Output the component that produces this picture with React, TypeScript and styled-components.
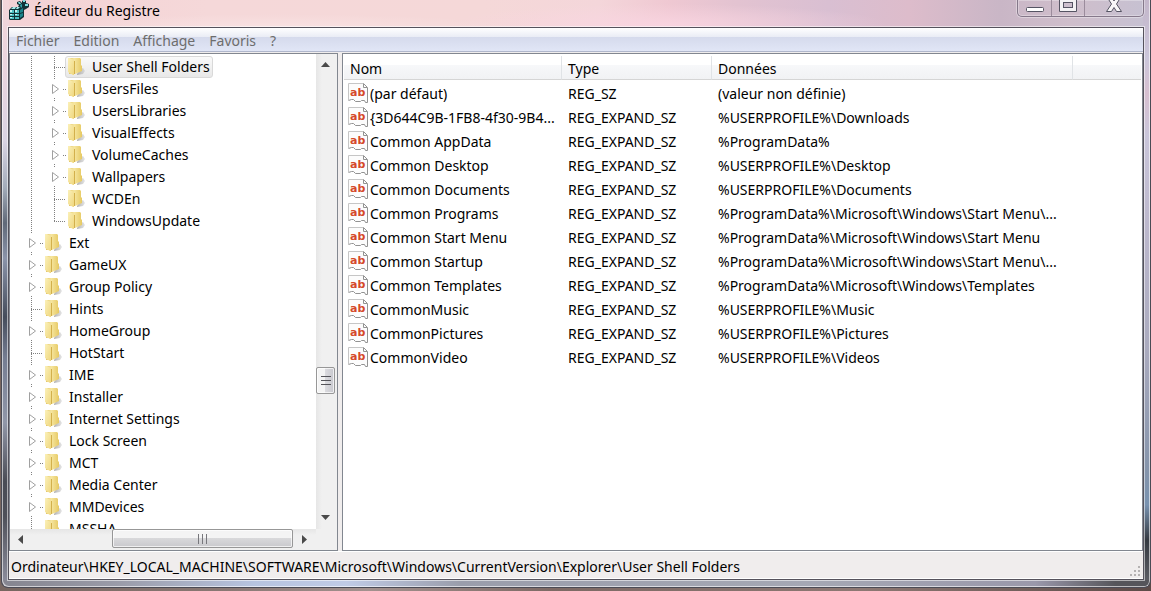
import React from 'react';
import styled, { createGlobalStyle, css } from 'styled-components';

const GlobalStyle = createGlobalStyle`
  *, *::before, *::after { box-sizing: border-box; }
  body {
    margin: 0;
    background: #77645f;
    color: #000;
    font: 14px/20px "Noto Sans", "Open Sans", sans-serif;
  }
  button {
    margin: 0;
    padding: 0;
    border: 0;
    background: none;
    color: inherit;
    font: inherit;
  }
`;

const Desktop = styled.div`
  display: flex;
  height: 100vh;
  padding: 0 0 3px 1px;
  background: linear-gradient(90deg, #77665f, #8a7874 20%, #a3918e 32%, #7d6964 48%, #8d7873 75%, #5d4b48);
`;

const Window = styled.div`
  flex: 1;
  min-width: 0;
  display: flex;
  flex-direction: column;
  border: 1px solid #4b4b55;
  border-top: 0;
  border-radius: 0 0 7px 7px;
  box-shadow: inset 1px -1px 0 rgba(255, 255, 255, 0.6), inset -1px 0 0 rgba(255, 255, 255, 0.6);
  background:
    linear-gradient(90deg, #85858f, #9a9ba8 10%, #b7c4e0 22%, #c0cbe6 30%, #9a9dab 40%, #a5a8b4 70%, #9a98ab 90%, #55555a 97%) 0 100% / 100% 7px no-repeat,
    linear-gradient(#f3d6da, #e6d3df 15%, #d9d3e3 24%, #a3abb9 32%, #606978 38%, #8b94aa 44%, #454c5b 54%, #757d92 61%, #9197a8 72%, #4a4c55 82%, #4e5059 88%, #9292a2) 0 0 / 7px 100% no-repeat,
    linear-gradient(#c3b6ca, #cbc6da 10%, #d7bfd0 16%, #c9c5da 23%, #bcb8cd 38%, #a9aabe 60%, #8594ab 80%, #7892b0 86%, #343941 92%, #626269) 100% 0 / 7px 100% no-repeat,
    radial-gradient(ellipse 240px 14px at 24% 28px, rgba(255, 240, 240, 0.4), transparent),
    radial-gradient(ellipse 220px 20px at 58% 24px, rgba(250, 214, 226, 0.8), transparent),
    linear-gradient(90deg, #f4d2d5, #f5d8d9 18%, #f5d8d8 42%, #f4d6da 52%, #efc8d2 58%, #e3c3d1 64%, #d9bfd2 72%, #ddbccb 79%, #c9b6c6 87%, #cfbecb 93%, #c6c1d2) 0 0 / 100% 28px no-repeat;
`;

const TitleBar = styled.header`
  display: flex;
  justify-content: space-between;
  align-items: flex-start;
  height: 27px;
  padding: 0 6px 0 7px;
`;

const Caption = styled.h1`
  display: flex;
  align-items: center;
  gap: 5px;
  height: 21px;
  margin: 0;
  font-size: 14px;
  font-weight: 400;
`;

const CaptionButtons = styled.div`
  display: flex;
  height: 17px;
  border: 1px solid #85788a;
  border-top: 0;
  border-radius: 0 0 5px 5px;
  box-shadow: 0 0 0 1px rgba(255, 255, 255, 0.35), inset 0 0 0 1px rgba(255, 255, 255, 0.3);
`;

const CaptionButton = styled.button<{ $wide?: boolean }>`
  display: flex;
  align-items: flex-start;
  justify-content: center;
  width: ${(p) => (p.$wide ? 59 : 33)}px;
  height: 16px;
  & + & { border-left: 1px solid #9b8c9c; }
`;

const Client = styled.main`
  flex: 1;
  min-height: 0;
  display: flex;
  flex-direction: column;
  margin: 0 6px 7px;
  border: 1px solid #55525c;
  box-shadow: 0 0 0 1px rgba(255, 255, 255, 0.55);
  background: #f0eded;
`;

const MenuBar = styled.nav`
  display: flex;
  flex: none;
  height: 24px;
  border-bottom: 1px solid #b0b7cc;
  background: linear-gradient(#fff, #e9ecf5 9px, #d5daec 9px, #e1e6f6);
`;

const MenuItem = styled.button`
  height: 24px;
  padding: 2px 7px 0;
  color: #6d6d6d;
`;

const Panes = styled.div`
  flex: 1;
  min-height: 0;
  display: grid;
  grid-template-columns: 329px minmax(0, 1fr);
  gap: 4px;
  margin-top: 1px;
`;

const paneFrame = css`
  min-height: 0;
  overflow: hidden;
  border: 1px solid #828790;
  background: #fff;
`;

const TreePane = styled.section`
  ${paneFrame}
  display: grid;
  grid-template-columns: minmax(0, 1fr) 21px;
  grid-template-rows: minmax(0, 1fr) 21px;
`;

const Tree = styled.ul`
  min-height: 0;
  margin: 0;
  padding: 2px 0 0 10px;
  overflow: hidden;
  list-style: none;
`;

const TreeRow = styled.li`
  display: flex;
  height: 22px;
`;

const dots = 'repeating-linear-gradient(#808080 0 1px, transparent 1px 2px)';
const dashes = 'repeating-linear-gradient(90deg, #808080 0 1px, transparent 1px 2px)';

type Joint = 'line' | 'leaf' | 'last' | 'branch';

const joints: Record<Joint, string> = {
  line: `${dots} 11px 0 / 1px 100% no-repeat`,
  leaf: `${dots} 11px 0 / 1px 100% no-repeat, ${dashes} 11px 11px / 11px 1px no-repeat`,
  last: `${dots} 11px 0 / 1px 11px no-repeat, ${dashes} 11px 11px / 11px 1px no-repeat`,
  branch: `${dots} 11px 0 / 1px 2px no-repeat, ${dots} 11px 20px / 1px 2px no-repeat, ${dashes} 20px 11px / 3px 1px no-repeat`,
};

const Guide = styled.span<{ $joint: Joint }>`
  flex: none;
  display: flex;
  align-items: center;
  justify-content: center;
  width: 23px;
  height: 22px;
  background: ${(p) => joints[p.$joint]};
`;

const Expander = styled.button`
  display: flex;
  width: 9px;
  height: 12px;
`;

const Node = styled.button<{ $selected?: boolean }>`
  display: flex;
  align-items: center;
  gap: 5px;
  height: 22px;
  margin-left: -1px;
  padding: 0 2px;
  border: 1px solid ${(p) => (p.$selected ? '#d9d9d9' : 'transparent')};
  border-radius: 3px;
  background: ${(p) => (p.$selected ? 'linear-gradient(#fafafa, #e8e8e8)' : 'none')};
  white-space: nowrap;
`;

const ScrollBar = styled.div<{ $vertical?: boolean }>`
  display: flex;
  flex-direction: ${(p) => (p.$vertical ? 'column' : 'row')};
  padding: 0 2px ${(p) => (p.$vertical ? 2 : 0)}px 0;
  background: ${(p) =>
    p.$vertical ? 'linear-gradient(90deg, #e6e6e6, #f0f0f0 6px)' : 'linear-gradient(#e6e6e6, #f0f0f0 6px)'};
`;

const ScrollArrow = styled.button`
  flex: 0 0 20px;
  display: flex;
  align-items: center;
  justify-content: center;
`;

const Track = styled.div<{ $vertical?: boolean; $before: number; $after: number }>`
  flex: 1;
  min-height: 0;
  display: grid;
  ${(p) =>
    p.$vertical
      ? `grid-template-rows: ${p.$before}fr 27px ${p.$after}fr;`
      : `grid-template-columns: ${p.$before}fr 181px ${p.$after}fr;`}
`;

const Thumb = styled.div<{ $vertical?: boolean }>`
  display: flex;
  align-items: center;
  justify-content: center;
  border: 1px solid #979797;
  border-radius: 2px;
  box-shadow: inset 0 0 0 1px rgba(255, 255, 255, 0.7);
  ${(p) =>
    p.$vertical
      ? 'grid-row: 2; background: linear-gradient(90deg, #f4f4f4 45%, #dcdce0 45%, #c8c8ce);'
      : 'grid-column: 2; margin-bottom: 2px; background: linear-gradient(#f4f4f4 45%, #dadadc 45%, #c9c9cd);'}
`;

const Corner = styled.div`
  background: #f0f0f0;
`;

const ListPane = styled.section`
  ${paneFrame}
  padding: 2px 1px 0;
`;

const Values = styled.table`
  width: 100%;
  table-layout: fixed;
  border-collapse: separate;
  border-spacing: 0;
  tbody::before {
    content: "";
    display: block;
    height: 2px;
  }
`;

const Col = styled.col<{ $width?: number }>`
  ${(p) => p.$width && `width: ${p.$width}px;`}
`;

const HeadCell = styled.th`
  height: 24px;
  padding: 2px 6px 0;
  border-right: 1px solid #e0e3e6;
  border-bottom: 1px solid #d5d5d5;
  background: linear-gradient(#fff 9px, #f7f8fa 9px, #f1f2f4);
  font-weight: 400;
  text-align: left;
  &:last-child { border-right: 0; }
`;

const Cell = styled.td`
  height: 24px;
  padding: 0 6px;
  overflow: hidden;
  white-space: nowrap;
`;

const ValueName = styled.div`
  display: flex;
  align-items: center;
  gap: 2px;
  margin: 0 -6px 0 -2px;
`;

const StatusBar = styled.footer`
  display: flex;
  flex: none;
  align-items: flex-end;
  justify-content: space-between;
  height: 28px;
  padding: 0 2px 1px;
  border-top: 1px solid #fff;
  border-bottom: 1px solid #fff;
`;

function RegistryIcon() {
  return (
    <svg width="20" height="21" viewBox="0 0 20 21" aria-hidden="true">
      <path d="M0 10 3 7H9L10 5 8 4V2L11 1 13 3V1L15 0 17 1V3L20 4V7L17 9 15 10V17L11 20H1L0 19Z" fill="#123236" />
      <path d="M1 10H5V13H1ZM6 10H10V13H6ZM1 14H5V16H1ZM6 14H10V16H6ZM1 17H5V19H1ZM6 17H10V19H6Z" fill="#4fbfc2" />
      <path d="M4 7H7L6 9H2ZM8 7H11L9 9H7Z" fill="#a5eaea" />
      <path d="M11 10 14 8V12L11 13ZM11 14 14 13V16L11 18Z" fill="#1b868c" />
      <path d="M9 2 11 2 12 4 10 4ZM16 4H19V6H16ZM14 0H16V2H14Z" fill="#7bdcde" />
      <path d="M11 5 13 4V7L12 8Z" fill="#2fa4a9" />
      <path d="M1 10H3V12H1ZM6 10H8V12H6ZM1 14H3V15H1ZM6 14H8V15H6ZM1 17H3V18H1Z" fill="#c4f5f4" />
    </svg>
  );
}

function FolderIcon() {
  return (
    <svg width="19" height="20" viewBox="0 0 19 20" aria-hidden="true">
      <defs>
        <linearGradient id="leaf" x1="0" x2="1" y1="0" y2="1">
          <stop offset="0" stopColor="#fbf0b8" />
          <stop offset="1" stopColor="#efd77f" />
        </linearGradient>
        <linearGradient id="back" x1="0" x2="1">
          <stop offset="0" stopColor="#e2c568" />
          <stop offset="0.4" stopColor="#f6e6a0" />
          <stop offset="1" stopColor="#e6c962" />
        </linearGradient>
        <linearGradient id="shade" x1="0" x2="1">
          <stop offset="0" stopColor="#8e8e8e" stopOpacity="0.7" />
          <stop offset="1" stopColor="#a8a8a8" stopOpacity="0.3" />
        </linearGradient>
      </defs>
      <path d="M9 17 12 13 15 11 17 14 15 17 9 18Z" fill="url(#shade)" />
      <path d="M1 1H12L13 2V8L14 9V14L7 17H1Z" fill="url(#back)" />
      <path d="M0 1 2 1 6 3V18L5 18 0 15Z" fill="url(#leaf)" />
      <path d="M6.5 4V17" stroke="#d3b04c" />
    </svg>
  );
}

function StringIcon() {
  return (
    <svg width="20" height="22" viewBox="0 0 20 22" aria-hidden="true">
      <path d="M.5 .5H15.5L19.5 4.5V19.5H17.5L15.5 17.5H13.5L12.5 18.5H7.5L5.5 16.5H3.5L.5 17.5Z" fill="#fcfcfc" />
      <path d="M.5 17V.5H15" fill="none" stroke="#c6c6c6" />
      <path d="M15.5 .5V4.5H19.5ZM19.5 5V19.5H17.5L16.5 17.5H13.5L12.5 18.5H7.5L5.5 16.5H3.5L.5 17.5" fill="none" stroke="#929292" />
      <text x="2" y="13" fill="#d5482a" fontFamily="DejaVu Sans" fontSize="11" fontWeight="700">ab</text>
    </svg>
  );
}

type Direction = 'up' | 'down' | 'left' | 'right';

const arrowPaths: Record<Direction, string> = {
  up: 'M0 7 4.500 2 9 7Z',
  down: 'M0 2H9L4.500 7Z',
  left: 'M7 0V9L2 4.500Z',
  right: 'M2 0 7 4.500 2 9Z',
};

function Arrow({ to }: { to: Direction }) {
  return (
    <ScrollArrow type="button" aria-label={`Défiler (${to})`}>
      <svg width="9" height="9" viewBox="0 0 9 9"><path d={arrowPaths[to]} fill="#4a4a4a" /></svg>
    </ScrollArrow>
  );
}

const nodes: { name: string; depth: 1 | 2; joint: Joint }[] = [
  { name: 'User Shell Folders', depth: 2, joint: 'leaf' },
  { name: 'UsersFiles', depth: 2, joint: 'branch' },
  { name: 'UsersLibraries', depth: 2, joint: 'branch' },
  { name: 'VisualEffects', depth: 2, joint: 'branch' },
  { name: 'VolumeCaches', depth: 2, joint: 'branch' },
  { name: 'Wallpapers', depth: 2, joint: 'branch' },
  { name: 'WCDEn', depth: 2, joint: 'leaf' },
  { name: 'WindowsUpdate', depth: 2, joint: 'last' },
  { name: 'Ext', depth: 1, joint: 'branch' },
  { name: 'GameUX', depth: 1, joint: 'branch' },
  { name: 'Group Policy', depth: 1, joint: 'branch' },
  { name: 'Hints', depth: 1, joint: 'leaf' },
  { name: 'HomeGroup', depth: 1, joint: 'branch' },
  { name: 'HotStart', depth: 1, joint: 'leaf' },
  { name: 'IME', depth: 1, joint: 'branch' },
  { name: 'Installer', depth: 1, joint: 'branch' },
  { name: 'Internet Settings', depth: 1, joint: 'branch' },
  { name: 'Lock Screen', depth: 1, joint: 'branch' },
  { name: 'MCT', depth: 1, joint: 'branch' },
  { name: 'Media Center', depth: 1, joint: 'branch' },
  { name: 'MMDevices', depth: 1, joint: 'branch' },
  { name: 'MSSHA', depth: 1, joint: 'leaf' },
];

const values = [
  ['(par défaut)', 'REG_SZ', '(valeur non définie)'],
  ['{3D644C9B-1FB8-4f30-9B4...', 'REG_EXPAND_SZ', '%USERPROFILE%\\Downloads'],
  ['Common AppData', 'REG_EXPAND_SZ', '%ProgramData%'],
  ['Common Desktop', 'REG_EXPAND_SZ', '%USERPROFILE%\\Desktop'],
  ['Common Documents', 'REG_EXPAND_SZ', '%USERPROFILE%\\Documents'],
  ['Common Programs', 'REG_EXPAND_SZ', '%ProgramData%\\Microsoft\\Windows\\Start Menu\\...'],
  ['Common Start Menu', 'REG_EXPAND_SZ', '%ProgramData%\\Microsoft\\Windows\\Start Menu'],
  ['Common Startup', 'REG_EXPAND_SZ', '%ProgramData%\\Microsoft\\Windows\\Start Menu\\...'],
  ['Common Templates', 'REG_EXPAND_SZ', '%ProgramData%\\Microsoft\\Windows\\Templates'],
  ['CommonMusic', 'REG_EXPAND_SZ', '%USERPROFILE%\\Music'],
  ['CommonPictures', 'REG_EXPAND_SZ', '%USERPROFILE%\\Pictures'],
  ['CommonVideo', 'REG_EXPAND_SZ', '%USERPROFILE%\\Videos'],
];

export default function App() {
  const [selected, setSelected] = React.useState('User Shell Folders');

  return (
    <Desktop>
      <GlobalStyle />
      <Window>
        <TitleBar>
          <Caption><RegistryIcon />Éditeur du Registre</Caption>
          <CaptionButtons>
            <CaptionButton type="button" aria-label="Réduire">
              <svg width="18" height="14"><rect x="0.500" y="7.500" width="17" height="4" rx="1" fill="#fff" stroke="#555463" /></svg>
            </CaptionButton>
            <CaptionButton type="button" aria-label="Agrandir">
              <svg width="18" height="14">
                <path d="M.5-2V11.500H17.500V-2Z" fill="#f4f2f4" stroke="#555463" />
                <rect x="4.500" y="2.500" width="9" height="5" fill="#cdbfcd" stroke="#555463" />
              </svg>
            </CaptionButton>
            <CaptionButton type="button" aria-label="Fermer" $wide>
              <svg width="18" height="14">
                <path d="M2-3H6.500L9 1 11.500-3H16L11.500 4 16.500 11.500H11.500L9 7.500 6.500 11.500H1.500L6.500 4Z" fill="#f8f6f8" stroke="#555463" />
              </svg>
            </CaptionButton>
          </CaptionButtons>
        </TitleBar>
        <Client>
          <MenuBar>
            {['Fichier', 'Edition', 'Affichage', 'Favoris', '?'].map((m) => (
              <MenuItem type="button" key={m}>{m}</MenuItem>
            ))}
          </MenuBar>
          <Panes>
            <TreePane>
              <Tree>
                {nodes.map((n) => (
                  <TreeRow key={n.name}>
                    {n.depth === 2 && <Guide $joint="line" />}
                    <Guide $joint={n.joint}>
                      {n.joint === 'branch' && (
                        <Expander type="button" aria-label={`Développer ${n.name}`}>
                          <svg width="9" height="12"><path d="M2.500 1.500V10.500L8.500 6Z" fill="#fff" stroke="#a0a0a0" /></svg>
                        </Expander>
                      )}
                    </Guide>
                    <Node type="button" $selected={n.name === selected} onClick={() => setSelected(n.name)}>
                      <FolderIcon />{n.name}
                    </Node>
                  </TreeRow>
                ))}
              </Tree>
              <ScrollBar $vertical>
                <Arrow to="up" />
                <Track $vertical $before={292} $after={112}>
                  <Thumb $vertical>
                    <svg width="10" height="11"><path d="M0 1.500H10M0 5.500H10M0 9.500H10" stroke="#55555a" /></svg>
                  </Thumb>
                </Track>
                <Arrow to="down" />
              </ScrollBar>
              <ScrollBar>
                <Arrow to="left" />
                <Track $before={82} $after={1}>
                  <Thumb>
                    <svg width="11" height="10"><path d="M1.500 0V10M5.500 0V10M9.500 0V10" stroke="#77777c" /></svg>
                  </Thumb>
                </Track>
                <Arrow to="right" />
              </ScrollBar>
              <Corner />
            </TreePane>
            <ListPane>
              <Values>
                <colgroup>
                  <Col $width={218} />
                  <Col $width={150} />
                  <Col $width={361} />
                  <Col />
                </colgroup>
                <thead>
                  <tr>
                    <HeadCell scope="col">Nom</HeadCell>
                    <HeadCell scope="col">Type</HeadCell>
                    <HeadCell scope="col">Données</HeadCell>
                    <HeadCell as="td" />
                  </tr>
                </thead>
                <tbody>
                  {values.map(([name, type, data]) => (
                    <tr key={name}>
                      <Cell><ValueName><StringIcon />{name}</ValueName></Cell>
                      <Cell>{type}</Cell>
                      <Cell>{data}</Cell>
                      <Cell />
                    </tr>
                  ))}
                </tbody>
              </Values>
            </ListPane>
          </Panes>
          <StatusBar>
            <span>Ordinateur\HKEY_LOCAL_MACHINE\SOFTWARE\Microsoft\Windows\CurrentVersion\Explorer\User Shell Folders</span>
            <svg width="12" height="12" aria-hidden="true">
              <path d="M9 1H11V3H9ZM5 5H7V7H5ZM9 5H11V7H9ZM1 9H3V11H1ZM5 9H7V11H5ZM9 9H11V11H9Z" fill="#b5b2b2" />
            </svg>
          </StatusBar>
        </Client>
      </Window>
    </Desktop>
  );
}
